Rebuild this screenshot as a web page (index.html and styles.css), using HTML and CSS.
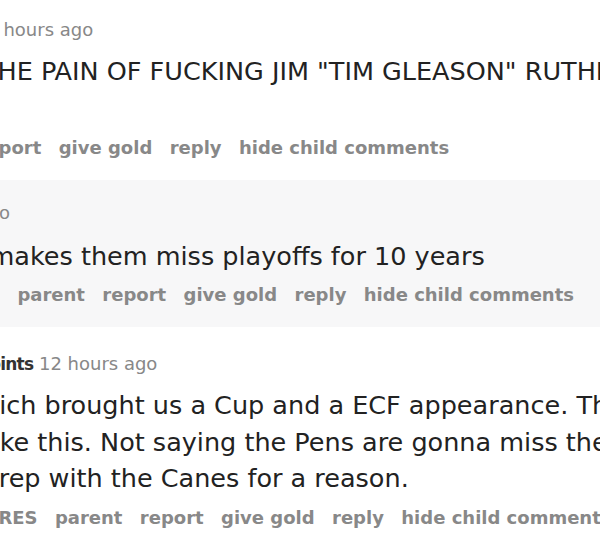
FILE: index.html
```html
<!DOCTYPE html>
<html lang="en">
<head>
<meta charset="utf-8">
<title>Comments</title>
<link rel="stylesheet" href="styles.css">
</head>
<body>
<div class="thread">
  <div class="comment c1">
    <p class="tagline"><span class="line t1">12 hours ago</span></p>
    <div class="md md-spaced">
      <p class="line b1">THE PAIN OF FUCKING JIM "TIM GLEASON" RUTHERFORD</p>
    </div>
    <ul class="buttons k1">
      <li>report</li>
      <li>give gold</li>
      <li>reply</li>
      <li>hide child comments</li>
    </ul>
  </div>

  <div class="comment c2 child">
    <p class="tagline"><span class="line t2">12 hours ago</span></p>
    <div class="md">
      <p class="line b2">makes them miss playoffs for 10 years</p>
    </div>
    <ul class="buttons k2">
      <li>parent</li>
      <li>report</li>
      <li>give gold</li>
      <li>reply</li>
      <li>hide child comments</li>
    </ul>
  </div>

  <div class="comment c3">
    <p class="tagline"><span class="line t3"><b class="score">points</b> 12 hours ago</span></p>
    <div class="md">
      <p class="line b3a">which brought us a Cup and a ECF appearance. The</p>
      <p class="line b3b">like this. Not saying the Pens are gonna miss them</p>
      <p class="line b3c">rep with the Canes for a reason.</p>
    </div>
    <ul class="buttons k3">
      <li>save-RES</li>
      <li>parent</li>
      <li>report</li>
      <li>give gold</li>
      <li>reply</li>
      <li>hide child comments</li>
    </ul>
  </div>
</div>
</body>
</html>
```

FILE: styles.css
```css
html, body {
  margin: 0;
  padding: 0;
  background: #ffffff;
}

body {
  width: 600px;
  height: 536px;
  overflow: hidden;
  font-family: "DejaVu Sans", Verdana, sans-serif;
}

.thread {
  display: flex;
  flex-direction: column;
}

.comment {
  overflow: hidden;
}

.c1 {
  padding-top: 17.8px;
  padding-bottom: 20.2px;
}

.child {
  background: #f7f7f8;
  padding-top: 20.8px;
  padding-bottom: 20.7px;
}

.c3 {
  padding-top: 24.1px;
}

.tagline {
  margin: 0;
  font-size: 18px;
  line-height: 24px;
  color: #888888;
  white-space: nowrap;
}

.tagline .line {
  display: block;
}

.score {
  color: #333333;
  font-weight: bold;
  font-size: 17px;
  letter-spacing: -0.8px;
}

.md {
  margin-top: 11.5px;
  font-size: 25.5px;
  line-height: 36.5px;
  color: #222222;
}

.c2 .md {
  margin-top: 13px;
}

.md p {
  margin-top: 0;
  margin-bottom: 0;
  white-space: nowrap;
}

.md-spaced {
  padding-bottom: 36.5px;
}

.buttons {
  list-style: none;
  margin: 9.5px 0 0 0;
  padding: 0;
  display: flex;
  gap: 17.4px;
  font-size: 18px;
  line-height: 24px;
  font-weight: bold;
  color: #888888;
  white-space: nowrap;
}

.buttons li {
  flex: none;
}

.c2 .buttons {
  margin-top: 8.5px;
}

.t1 { margin-left: -25.2px; }
.b1 { margin-left: -18.1px; }
.k1 { margin-left: -22.5px; }

.t2 { margin-left: -108.4px; }
.b2 { margin-left: -10.5px; }
.k2 { margin-left: 17.4px; }

.t3 { margin-left: -22px; }
.b3a { margin-left: -37.9px; }
.b3b { margin-left: -14.5px; }
.b3c { margin-left: -1.3px; }
.k3 { margin-left: -55.9px; }
```
